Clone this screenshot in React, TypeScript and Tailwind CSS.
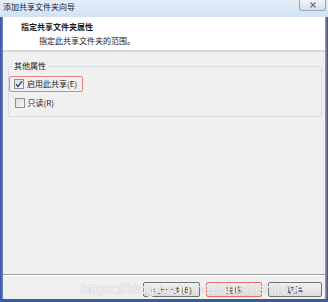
export default function App() {
  const font = { fontFamily: '"Noto Sans CJK SC", "Liberation Sans", sans-serif' };
  return (
    <div className="flex h-[302px] w-[328px] flex-col overflow-hidden bg-[#f0f0f0] text-[8px] leading-[10px] text-[#1a1a1a]" style={font}>
      {/* title bar */}
      <div className="flex h-[17px] shrink-0 items-start justify-between bg-gradient-to-b from-[#e4eefa] to-[#d2e2f3]">
        <span className="pl-[3px] pt-[2px]">添加共享文件夹向导</span>
        <div className="mr-[2px] flex h-[11px] w-[27px] items-center justify-center rounded-b-[3px] border border-t-0 border-[#9aa6b8] bg-gradient-to-b from-[#f2f5f9] to-[#d9dfe7]">
          <svg width="6" height="6" viewBox="0 0 6 6">
            <path d="M0.5 0.5 L5.5 5.5 M5.5 0.5 L0.5 5.5" stroke="#6f7680" strokeWidth="1.4" />
          </svg>
        </div>
      </div>

      <div className="flex min-h-0 flex-1">
        <div className="w-[3px] shrink-0 bg-gradient-to-r from-[#34529a] to-[#6b86c4]" />
        <div className="flex min-w-0 flex-1 flex-col">
          {/* header */}
          <div className="h-[35px] shrink-0 border-b-2 border-[#d8d8d8] bg-white">
            <div className="pl-[18px] pt-[5px] font-bold">指定共享文件夹属性</div>
            <div className="pl-[36px] pt-[4px]">指定此共享文件夹的范围。</div>
          </div>

          {/* body */}
          <div className="flex-1 px-[5px] pr-[3px] pt-[9px]">
            <fieldset className="h-[56px] rounded-[3px] border border-[#d5dde5] px-0">
              <legend className="ml-[3px] px-[2px]">其他属性</legend>
              <div className="mt-[5px] flex h-[16px] w-[74px] items-center gap-[3px] rounded-[2px] border-[1.5px] border-[#e98080] pl-[4px]">
                <span className="flex h-[10px] w-[10px] items-center justify-center border border-[#8e8f8f] bg-gradient-to-br from-[#dcdcdc] to-[#f6f6f6]">
                  <svg width="8" height="8" viewBox="0 0 8 8">
                    <path d="M1 4.2 L3 6.4 L7 1.2" fill="none" stroke="#2a3f7a" strokeWidth="1.3" />
                  </svg>
                </span>
                <span>启用此共享(E)</span>
              </div>
              <div className="mt-[3px] flex h-[16px] items-center gap-[3px] pl-[5.5px]">
                <span className="h-[10px] w-[10px] border border-[#8e8f8f] bg-gradient-to-br from-[#dcdcdc] to-[#f6f6f6]" />
                <span>只读(R)</span>
              </div>
            </fieldset>
          </div>

          {/* footer */}
          <div className="relative h-[25px] shrink-0 border-t border-[#a0a0a0]">
            <div className="flex justify-end gap-[6px] border-t border-white pr-[3px] pt-[6px]">
              <button className="h-[15px] w-[57px] rounded-[2px] border border-[#707070] bg-gradient-to-b from-[#f2f2f2] to-[#dcdcdc] text-[8px] leading-[12px]">&lt; 上一步(B)</button>
              <button className="h-[15px] w-[56px] rounded-[2px] border border-[#e36b6b] bg-gradient-to-b from-[#f2f2f2] to-[#dcdcdc] text-[8px] leading-[12px]">完成</button>
              <button className="h-[15px] w-[54px] rounded-[2px] border border-[#707070] bg-gradient-to-b from-[#f2f2f2] to-[#dcdcdc] text-[8px] leading-[12px]">取消</button>
            </div>
            <span
              className="pointer-events-none absolute left-[78px] top-[6px] whitespace-nowrap text-[15px] leading-[16px] text-white/90 [text-shadow:0_0_1px_#9a9a9a]"
              style={{ fontFamily: '"Liberation Sans", sans-serif' }}
            >
              https://blog.csdn.net/shishishilove
            </span>
          </div>
        </div>
        <div className="w-[3px] shrink-0 bg-gradient-to-r from-[#8da2cf] to-[#4a4f5a]" />
      </div>
      <div className="h-[3px] shrink-0 bg-[#3b5a9e]" />
    </div>
  );
}
